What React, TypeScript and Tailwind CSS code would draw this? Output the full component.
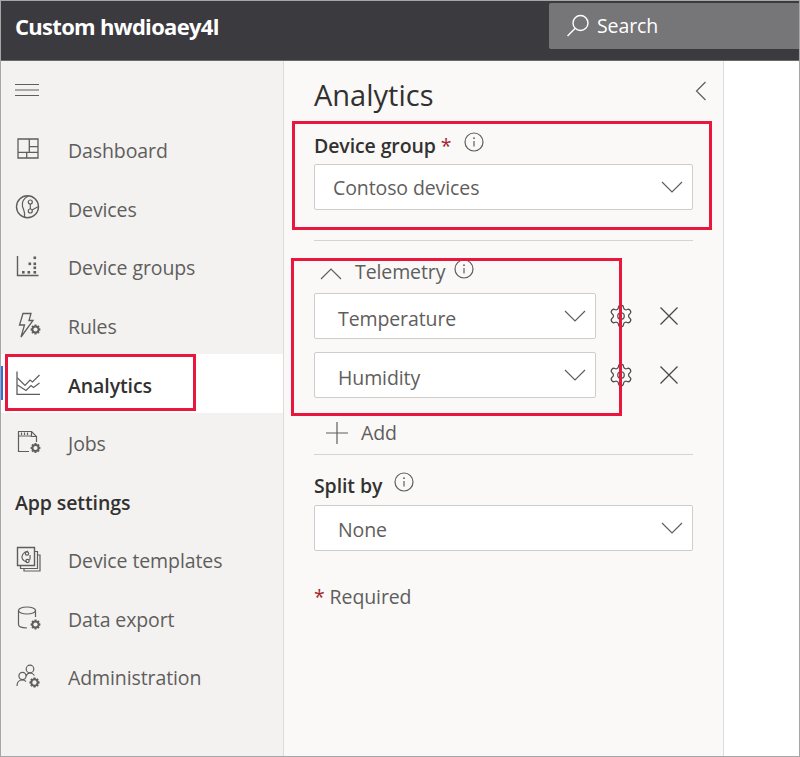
import React from "react";
import { Settings } from "lucide-react";

const Svg = ({ s = 26, children, className = "" }: { s?: number; children: React.ReactNode; className?: string }) => (
  <svg width={s} height={s} viewBox="0 0 26 26" fill="none" stroke="#5f5e5c" strokeWidth="1.2" className={`shrink-0 ${className}`}>
    {children}
  </svg>
);

const gearPath = (cx: number, cy: number, r: number, inner = 0.72) => {
  const pts: string[] = [];
  for (let i = 0; i < 8; i++) {
    const a = (i * Math.PI) / 4;
    const a1 = a - 0.2;
    const a2 = a + 0.2;
    const b1 = a + Math.PI / 8 - 0.1;
    const b2 = a + Math.PI / 8 + 0.1;
    const ir = r * inner;
    pts.push(`${cx + r * Math.cos(a1)},${cy + r * Math.sin(a1)}`);
    pts.push(`${cx + r * Math.cos(a2)},${cy + r * Math.sin(a2)}`);
    pts.push(`${cx + ir * Math.cos(b1)},${cy + ir * Math.sin(b1)}`);
    pts.push(`${cx + ir * Math.cos(b2)},${cy + ir * Math.sin(b2)}`);
  }
  return "M" + pts.join("L") + "Z";
};

const MiniGear = ({ cx, cy, r = 4.4 }: { cx: number; cy: number; r?: number }) => (
  <g>
    <path d={gearPath(cx, cy, r, 0.78)} fill="#5f5e5c" stroke="none" />
    <circle cx={cx} cy={cy} r={r * 0.42} fill="#f3f2f1" stroke="none" />
  </g>
);

const Dashboard = () => (
  <Svg>
    <path d="M3 3H23V22H3ZM14.3 3V16.3M14.3 10.7H23M3 16.3H23M11.7 16.3V22" strokeWidth="1.3" />
  </Svg>
);
const Devices = () => (
  <Svg>
    <circle cx="12.5" cy="12.8" r="11" strokeWidth="1.4" />
    <path d="M13.5 2C8.5 4 6.5 8.5 7.5 12.5C8.5 16 10.5 18 9.5 23.5" />
    <path d="M15.3 10V15" />
    <circle cx="15.3" cy="8" r="2" />
    <circle cx="15.3" cy="17" r="2" />
    <path d="M17 16L23 12.8" />
  </Svg>
);
const Groups = () => (
  <Svg>
    <path d="M2.5 3V22.5H23.5" strokeWidth="1.4" />
    <g fill="#5f5e5c" stroke="none">
      <rect x="18.5" y="3.5" width="2.6" height="2.6" />
      <rect x="18.5" y="9.5" width="2.6" height="2.6" />
      <rect x="18.5" y="13.5" width="2.6" height="2.6" />
      <rect x="13.5" y="9.5" width="2.6" height="2.6" />
      <rect x="18.5" y="18" width="2.6" height="2.6" />
      <rect x="12.5" y="18" width="2.6" height="2.6" />
      <rect x="7" y="18" width="2.6" height="2.6" />
    </g>
  </Svg>
);
const Rules = () => (
  <Svg>
    <path d="M8 1.5H16L14 8.5H18L6 25L9.5 13H4.5Z" strokeWidth="1.3" />
    <MiniGear cx={20.5} cy={17.5} r={5} />
  </Svg>
);
const AnalyticsIcon = () => (
  <Svg>
    <path d="M2 1.5V24.3H25" strokeWidth="1.3" />
    <path d="M2.5 15L11 20.5L16 15.5L18.5 17.5L24.5 13" />
    <path d="M2.5 8L10 15.5L15 10L17.5 12L24.5 5" />
  </Svg>
);
const Jobs = () => (
  <Svg>
    <path d="M14 22.5H3.5V2.5H16.5L21.5 7.5V13" />
    <path d="M16.5 2.5V7.5H21.5M3.5 7H16.5" />
    <path d="M6.5 3.5V6M9.5 3.5V6M12.5 3.5V6" />
    <MiniGear cx={20.5} cy={19} r={5} />
  </Svg>
);
const Templates = () => (
  <Svg>
    <path d="M2.5 1.5H19.5V19.5H2.5Z" strokeWidth="1.4" />
    <path d="M19.5 5.5H22.5V22.5H5.5V19.5M22.5 9H25V25H9V22.5" />
    <path d="M13 5C8 6 6 10 7.5 13C8.5 15 10 15.5 12 15.5M15 9C15 12 15.5 13 14.5 14" />
    <circle cx="12" cy="7.5" r="1.7" />
    <circle cx="12.5" cy="15" r="1.7" />
  </Svg>
);
const DataExport = () => (
  <Svg>
    <ellipse cx="12" cy="5.5" rx="8.5" ry="3.5" />
    <path d="M3.5 5.5V19.5C3.5 21.5 6 22.8 12 23M20.5 5.5V12" />
    <MiniGear cx={20.5} cy={19.5} r={5} />
  </Svg>
);
const Admin = () => (
  <Svg>
    <circle cx="15" cy="6" r="3.8" />
    <circle cx="7.5" cy="13" r="3.6" />
    <path d="M2 23C2 19 4.5 17 7.5 17C9 17 10 17.5 11 18.5M11 13C12 11 13.5 10 15 10C17 10 18.5 11 19.5 12.5" />
    <MiniGear cx={19.5} cy={19.5} r={5.2} />
  </Svg>
);

const Chevron = ({ up = false }: { up?: boolean }) => (
  <svg width="22" height="12" viewBox="0 0 22 12" fill="none" stroke="#5f5e5c" strokeWidth="1.2" className="shrink-0">
    <path d={up ? "M1 11L11 1L21 11" : "M1 1L11 11L21 1"} />
  </svg>
);

const Info = () => (
  <svg width="20" height="20" viewBox="0 0 20 20" fill="none" stroke="#5f5e5c" strokeWidth="1.2" className="shrink-0">
    <circle cx="10" cy="10" r="9" />
    <path d="M10 9V14.5" />
    <circle cx="10" cy="6.2" r="0.9" fill="#5f5e5c" stroke="none" />
  </svg>
);

const Gear = () => <Settings size={26} strokeWidth={1.15} color="#4f4e4c" className="shrink-0" />;

const Close = () => (
  <svg width="20" height="20" viewBox="0 0 20 20" fill="none" stroke="#4a4947" strokeWidth="1.3" className="shrink-0">
    <path d="M1.5 1.5L18.5 18.5M18.5 1.5L1.5 18.5" />
  </svg>
);

const Row = ({ icon, label, active = false }: { icon: React.ReactNode; label: string; active?: boolean }) => (
  <div className={`relative flex h-[58.6px] items-center pl-[14px] ${active ? "bg-white" : ""}`}>
    {active && <div className="absolute left-0 top-[12px] h-[34px] w-[2px] bg-[#2f6fde]" />}
    <div className="flex w-[53px] shrink-0 items-center">{icon}</div>
    <span className={`pt-[4px] text-[19.5px] leading-none tracking-[-0.1px] ${active ? "font-semibold text-[#323130]" : "text-[#5f5e5c]"}`}>{label}</span>
  </div>
);

const Select = ({ value, pad, textPad = "pt-[4px]", className = "" }: { value: string; pad: string; textPad?: string; className?: string }) => (
  <div className={`flex h-[46px] items-center justify-between rounded-[2px] border border-[#cfcdcb] bg-white pr-[9px] ${pad} ${className}`}>
    <span className={`text-[19.5px] leading-none tracking-[-0.1px] text-[#5f5e5c] ${textPad}`}>{value}</span>
    <Chevron />
  </div>
);

const RedBox = ({ className }: { className: string }) => (
  <div className={`pointer-events-none absolute border-[3px] border-[#e8173d] ${className}`} />
);

export default function App() {
  return (
    <div className="relative flex h-[757px] w-[800px] flex-col overflow-hidden border border-[#a6a6a6] bg-white font-['Open_Sans','Noto_Sans',sans-serif]">
      <header className="flex h-[60px] shrink-0 items-center justify-between border-b border-[#6a6a6a] bg-[#3b3a3f] pl-[14px]">
        <span className="mb-[8px] text-[22px] font-bold tracking-[-0.7px] text-white">Custom hwdioaey4l</span>
        <div className="mb-[10px] flex h-[46px] w-[250px] items-center gap-[7px] rounded-l-[2px] bg-[#767578] pl-[17px]">
          <svg width="24" height="24" viewBox="0 0 24 24" fill="none" stroke="#fff" strokeWidth="1.4">
            <circle cx="14.5" cy="9" r="7.5" />
            <path d="M9 14.5L1.5 22" />
          </svg>
          <span className="pt-[1px] text-[19.5px] leading-none tracking-[-0.1px] text-white">Search</span>
        </div>
      </header>

      <div className="flex min-h-0 flex-1">
        <nav className="w-[283px] shrink-0 border-r border-[#dedcda] bg-[#f3f2f1]">
          <div className="flex h-[58.6px] items-center pl-[14px]">
            <svg width="24" height="14" viewBox="0 0 24 14" fill="none" stroke="#5f5e5c" strokeWidth="1">
              <path d="M0 1.5H24M0 7H24M0 12.5H24" />
            </svg>
          </div>
          <Row icon={<Dashboard />} label="Dashboard" />
          <Row icon={<Devices />} label="Devices" />
          <Row icon={<Groups />} label="Device groups" />
          <Row icon={<Rules />} label="Rules" />
          <Row icon={<AnalyticsIcon />} label="Analytics" active />
          <Row icon={<Jobs />} label="Jobs" />
          <div className="flex h-[58.6px] items-center pl-[14px]">
            <span className="pt-[4px] text-[19.5px] font-semibold leading-none tracking-[-0.1px] text-[#323130]">App settings</span>
          </div>
          <Row icon={<Templates />} label="Device templates" />
          <Row icon={<DataExport />} label="Data export" />
          <Row icon={<Admin />} label="Administration" />
        </nav>

        <section className="w-[440px] shrink-0 border-r border-[#dedcda] bg-[#faf9f8] pl-[30px] pr-[30px]">
          <div className="flex h-[60px] items-center justify-between">
            <h1 className="pt-[6px] text-[29px] font-normal leading-none text-[#323130]">Analytics</h1>
            <svg width="12" height="20" viewBox="0 0 12 20" fill="none" stroke="#5f5e5c" strokeWidth="1.2" className="mr-[-14px]">
              <path d="M10.5 1L1.5 10L10.5 19" />
            </svg>
          </div>

          <div className="flex h-[43px] w-[379px] items-start">
            <div className="flex items-center gap-[13px] pt-[11px]">
              <span className="text-[19.5px] font-semibold leading-[26px] tracking-[-0.1px] text-[#323130]">
                Device group <span className="font-normal text-[#a4262c]">*</span>
              </span>
              <div className="mb-[8px]"><Info /></div>
            </div>
          </div>
          <Select value="Contoso devices" pad="pl-[18px]" textPad="pt-[2px]" className="w-[379px]" />
          <div className="mt-[30px] h-px w-[379px] bg-[#d6d4d2]" />

          <div className="flex h-[52px] items-center pl-[6px]">
            <div className="mt-[13px]"><Chevron up /></div>
            <span className="ml-[13px] pt-[10px] text-[19.5px] leading-none tracking-[-0.1px] text-[#5f5e5c]">Telemetry</span>
            <div className="ml-[9px] mt-[4px]"><Info /></div>
          </div>
          <div className="flex items-center">
            <Select value="Temperature" pad="pl-[23px]" textPad="pt-[6px]" className="w-[282px]" />
            <div className="ml-[12px]"><Gear /></div>
            <div className="ml-[25px]"><Close /></div>
          </div>
          <div className="mt-[13px] flex items-center">
            <Select value="Humidity" pad="pl-[23px]" textPad="pt-[6px]" className="w-[282px]" />
            <div className="ml-[12px]"><Gear /></div>
            <div className="ml-[25px]"><Close /></div>
          </div>
          <div className="flex h-[56px] items-center pl-[12px] pt-[14px]">
            <svg width="22" height="22" viewBox="0 0 22 22" fill="none" stroke="#5f5e5c" strokeWidth="1.2">
              <path d="M11 0V22M0 11H22" />
            </svg>
            <span className="ml-[13px] text-[19.5px] leading-none tracking-[-0.1px] text-[#5f5e5c]">Add</span>
          </div>
          <div className="h-px w-[379px] bg-[#d6d4d2]" />

          <div className="flex h-[50px] items-center gap-[12px] pt-[12px]">
            <span className="text-[19.5px] font-semibold leading-none tracking-[-0.1px] text-[#323130]">Split by</span>
            <div className="mb-[8px]"><Info /></div>
          </div>
          <Select value="None" pad="pl-[23px]" className="w-[379px]" />
          <div className="mt-[36px] text-[19.5px] leading-none tracking-[-0.1px] text-[#5f5e5c]">
            <span className="text-[#a4262c]">*</span> Required
          </div>
        </section>

        <div className="flex-1 bg-white" />
      </div>

      <RedBox className="left-[4px] top-[353px] h-[57px] w-[191px]" />
      <RedBox className="left-[291px] top-[120px] h-[109px] w-[420px]" />
      <RedBox className="left-[290px] top-[257px] h-[158px] w-[331px]" />
    </div>
  );
}
